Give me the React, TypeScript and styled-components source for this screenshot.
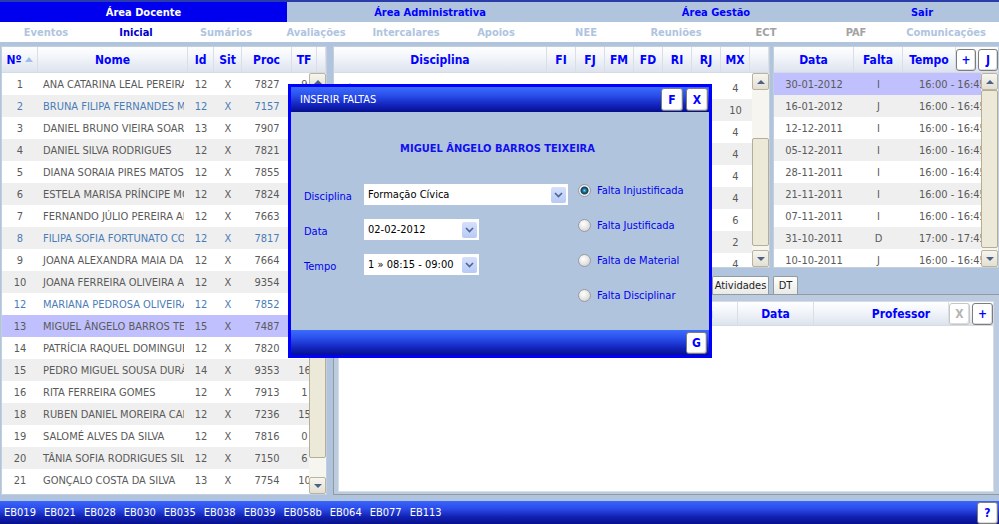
import React from "react";
import styled, { createGlobalStyle } from "styled-components";

const GlobalStyle = createGlobalStyle`
  html, body { margin: 0; padding: 0; background: #b0c4de; }
  body {
    font-family: "DejaVu Sans Condensed", "DejaVu Sans", Verdana, sans-serif;
    font-stretch: condensed;
    font-size: 11px;
  }
  * { box-sizing: border-box; }
`;

const Page = styled.div`
  position: relative;
  width: 999px;
  height: 524px;
  display: flex;
  flex-direction: column;
  background: #b0c4de;
  overflow: hidden;
`;

const TopNav = styled.div`
  display: grid;
  grid-template-columns: 287px 286px 286px 126px;
  height: 22px;
  border-top: 2px solid #2a3caa;
`;

const NavCell = styled.div<{ $active?: boolean }>`
  display: flex;
  align-items: center;
  justify-content: center;
  font-weight: bold;
  font-size: 11px;
  color: ${(p) => (p.$active ? "#ffffff" : "#0000ff")};
  background: ${(p) => (p.$active ? "#0000ee" : "transparent")};
`;

const SubNav = styled.div`
  display: grid;
  grid-template-columns: repeat(11, 90px);
  height: 20px;
  padding-left: 1px;
  background: #ffffff;
`;

const SubItem = styled.div<{ $tone: "on" | "off" | "dim" }>`
  display: flex;
  align-items: center;
  justify-content: center;
  font-weight: bold;
  font-size: 11px;
  color: ${(p) => (p.$tone === "on" ? "#0000cc" : p.$tone === "dim" ? "#a2a2a2" : "#b0c4de")};
`;

const Main = styled.div`
  flex: 1;
  display: flex;
  gap: 6px;
  padding: 4px 0 6px 1px;
  min-height: 0;
`;

const Panel = styled.div<{ $w: number }>`
  width: ${(p) => p.$w}px;
  display: flex;
  flex-direction: column;
  background: #ffffff;
  border: 1px solid #c4cfdd;
  overflow: hidden;
`;

const Header = styled.div<{ $cols: string; $h?: number }>`
  display: grid;
  grid-template-columns: ${(p) => p.$cols};
  height: ${(p) => p.$h ?? 26}px;
  flex-shrink: 0;
  background: linear-gradient(#ffffff, #f1f4f9 45%, #dde3ee);
  border-bottom: 1px solid #d5dbe5;
`;

const HeadCell = styled.div<{ $indent?: number }>`
  display: flex;
  align-items: center;
  justify-content: center;
  gap: 3px;
  padding-left: ${(p) => p.$indent ?? 0}px;
  font-weight: bold;
  font-size: 12px;
  color: #0000ff;
  border-right: 1px solid #d9dee7;
  white-space: nowrap;
  overflow: hidden;
`;

const HeadTools = styled.div`
  display: flex;
  align-items: center;
  justify-content: flex-end;
  gap: 2px;
  padding-right: 1px;
`;

const SortArrow = styled.span`
  width: 0;
  height: 0;
  border-left: 4px solid transparent;
  border-right: 4px solid transparent;
  border-bottom: 5px solid #9ec0e8;
`;

const Body = styled.div`
  flex: 1;
  display: flex;
  min-height: 0;
`;

const Rows = styled.div<{ $pad?: number }>`
  flex: 1;
  overflow: hidden;
  padding-top: ${(p) => p.$pad ?? 0}px;
`;

const Row = styled.div<{ $cols: string; $tone: "white" | "gray" | "sel" }>`
  display: grid;
  grid-template-columns: ${(p) => p.$cols};
  height: 22px;
  background: ${(p) => (p.$tone === "sel" ? "#c0c0ff" : p.$tone === "gray" ? "#efefef" : "#ffffff")};
`;

const Cell = styled.div<{ $align?: "left" | "center" | "right"; $blue?: boolean; $pad?: number; $clip?: number }>`
  display: flex;
  align-items: center;
  justify-content: ${(p) => (p.$align === "left" ? "flex-start" : p.$align === "right" ? "flex-end" : "center")};
  padding-left: ${(p) => p.$pad ?? 0}px;
  margin-right: ${(p) => p.$clip ?? 0}px;
  white-space: nowrap;
  overflow: hidden;
  font-size: 11px;
  color: ${(p) => (p.$blue ? "#4a7cb8" : "#5a5a5a")};
`;

const ScrollCol = styled.div`
  width: 17px;
  flex-shrink: 0;
  display: flex;
  flex-direction: column;
  background: #f6f5f0;
`;

const ScrollBtn = styled.div`
  height: 17px;
  display: flex;
  align-items: center;
  justify-content: center;
  background: linear-gradient(#f6f5ef, #e3e0d2);
  border: 1px solid #b9b39f;
  border-radius: 2px;
`;

const Tri = styled.span<{ $down?: boolean }>`
  width: 0;
  height: 0;
  border-left: 4px solid transparent;
  border-right: 4px solid transparent;
  ${(p) => (p.$down ? "border-top: 4px solid #4d6185;" : "border-bottom: 4px solid #4d6185;")}
`;

const Track = styled.div`
  flex: 1;
  position: relative;
`;

const Thumb = styled.div<{ $top: number; $h: number }>`
  position: absolute;
  left: 0;
  right: 0;
  top: ${(p) => p.$top}px;
  height: ${(p) => p.$h}px;
  background: #ece9d8;
  border: 1px solid #b4ad97;
  border-radius: 2px;
`;

const Scrollbar = ({ top, h }: { top: number; h: number }) => (
  <ScrollCol>
    <ScrollBtn>
      <Tri />
    </ScrollBtn>
    <Track>
      <Thumb $top={top} $h={h} />
    </Track>
    <ScrollBtn>
      <Tri $down />
    </ScrollBtn>
  </ScrollCol>
);

const SquareBtn = styled.button<{ $off?: boolean; $w?: number; $h?: number }>`
  width: ${(p) => p.$w ?? 20}px;
  height: ${(p) => p.$h ?? 22}px;
  padding: 0;
  display: flex;
  align-items: center;
  justify-content: center;
  font-family: inherit;
  font-weight: bold;
  font-size: 12px;
  color: ${(p) => (p.$off ? "#b4b4b4" : "#0000ff")};
  background: #ffffff;
  border: 1px solid ${(p) => (p.$off ? "#c6c6c6" : "#7d7d7d")};
  border-radius: 3px;
  box-shadow: inset -1px -1px 0 #dcdcdc;
`;

const RightArea = styled.div`
  width: 666px;
  display: flex;
  flex-direction: column;
`;

const TopRow = styled.div`
  display: flex;
  gap: 3px;
  height: 222px;
`;

const TabStrip = styled.div`
  display: flex;
  gap: 4px;
  height: 18px;
  margin-top: 8px;
`;

const Tab = styled.div<{ $w: number }>`
  width: ${(p) => p.$w}px;
  display: flex;
  align-items: center;
  justify-content: center;
  font-size: 11px;
  color: #1e1e1e;
  background: linear-gradient(#ffffff, #e9e9e6);
  border: 1px solid #919b9c;
  border-bottom: none;
  border-radius: 2px 2px 0 0;
`;

const BottomPanel = styled.div`
  flex: 1;
  display: flex;
  flex-direction: column;
  padding: 6px 5px 2px 4px;
  border: 1px solid #919b9c;
  border-right: none;
  background: #bccbe0;
`;

const BottomInner = styled.div`
  flex: 1;
  display: flex;
  flex-direction: column;
  background: #ffffff;
  border: 1px solid #d7dde6;
`;

const Footer = styled.div`
  height: 23px;
  display: flex;
  align-items: center;
  gap: 8px;
  padding-left: 4px;
  background: linear-gradient(#3a66fb, #2a4ae8 35%, #1020b0 70%, #08108c);
`;

const School = styled.span`
  color: #ffffff;
  font-size: 11px;
`;

const FooterEnd = styled.div`
  margin-left: auto;
  padding-right: 1px;
  align-self: flex-end;
`;

/* dialog */
const Dialog = styled.div`
  position: absolute;
  left: 288px;
  top: 84px;
  width: 424px;
  height: 274px;
  display: flex;
  flex-direction: column;
  border: 3px solid #0000ff;
  background: #b0c4de;
`;

const DialogBar = styled.div`
  height: 25px;
  flex-shrink: 0;
  display: flex;
  align-items: center;
  gap: 3px;
  padding: 0 1px 0 9px;
  background: linear-gradient(#3b6cfb, #2c52ee 30%, #1426c0 70%, #050f8c);
`;

const DialogTitle = styled.span`
  flex: 1;
  color: #ffffff;
  font-size: 11px;
`;

const DialogBody = styled.div`
  flex: 1;
  display: flex;
  flex-direction: column;
  padding: 30px 0 0 13px;
`;

const StudentName = styled.div`
  height: 14px;
  text-align: center;
  font-weight: bold;
  font-size: 11px;
  color: #1010ee;
  margin-right: 18px;
`;

const FormWrap = styled.div`
  display: flex;
  gap: 10px;
  margin-top: 28px;
`;

const Fields = styled.div`
  width: 264px;
  display: flex;
  flex-direction: column;
  gap: 14px;
`;

const Field = styled.div`
  display: flex;
  align-items: center;
  height: 21px;
`;

const Label = styled.span`
  width: 60px;
  padding-top: 3px;
  font-size: 11px;
  color: #0000ee;
`;

const Select = styled.div<{ $w: number }>`
  width: ${(p) => p.$w}px;
  height: 21px;
  display: flex;
  align-items: center;
  justify-content: space-between;
  padding: 0 2px 0 4px;
  background: #ffffff;
  font-size: 11px;
  color: #000000;
  white-space: nowrap;
`;

const Drop = styled.span`
  width: 15px;
  height: 16px;
  flex-shrink: 0;
  display: flex;
  align-items: center;
  justify-content: center;
  background: linear-gradient(#d5e0fb, #b8caf5);
  border-radius: 2px;
`;

const Radios = styled.div`
  display: flex;
  flex-direction: column;
  gap: 21px;
  margin-top: -1px;
`;

const RadioRow = styled.div`
  display: flex;
  align-items: center;
  gap: 6px;
  height: 14px;
  font-size: 11px;
  color: #0000ee;
`;

const RadioDot = styled.span<{ $on?: boolean }>`
  width: 13px;
  height: 13px;
  border-radius: 50%;
  border: 1px solid #9c9c9c;
  background: ${(p) =>
    p.$on
      ? "radial-gradient(circle at 50% 50%, #7fd0e8 0, #1b6b8c 2px, #0f3d5c 3.5px, #f4f4f4 4.5px, #d2d2d2 100%)"
      : "radial-gradient(circle at 40% 35%, #ffffff 0, #e6e6e6 50%, #c4c4c4 100%)"};
`;

const DialogFoot = styled.div`
  height: 25px;
  flex-shrink: 0;
  display: flex;
  align-items: center;
  justify-content: flex-end;
  padding-right: 2px;
  background: linear-gradient(#3b6cfb, #2c52ee 30%, #1426c0 70%, #050f8c);
`;

const Chevron = () => (
  <svg width="9" height="6" viewBox="0 0 9 6">
    <polyline points="1,1 4.5,4.5 8,1" fill="none" stroke="#4f6496" strokeWidth="1.6" />
  </svg>
);

type StudentRow = [string, string, string, string, string, string, boolean?];

const students: StudentRow[] = [
  ["1", "ANA CATARINA LEAL PEREIRA", "12", "X", "7827", "9"],
  ["2", "BRUNA FILIPA FERNANDES MOTA", "12", "X", "7157", "3", true],
  ["3", "DANIEL BRUNO VIEIRA SOARES", "13", "X", "7907", "2"],
  ["4", "DANIEL SILVA RODRIGUES", "12", "X", "7821", "4"],
  ["5", "DIANA SORAIA PIRES MATOS", "12", "X", "7855", "1"],
  ["6", "ESTELA MARISA PRÍNCIPE MOTA", "12", "X", "7824", "0"],
  ["7", "FERNANDO JÚLIO PEREIRA ALVES", "12", "X", "7663", "5"],
  ["8", "FILIPA SOFIA FORTUNATO COSTA", "12", "X", "7817", "2", true],
  ["9", "JOANA ALEXANDRA MAIA DA SILVA", "12", "X", "7664", "3"],
  ["10", "JOANA FERREIRA OLIVEIRA ALVES", "12", "X", "9354", "1"],
  ["12", "MARIANA PEDROSA OLIVEIRA", "12", "X", "7852", "0", true],
  ["13", "MIGUEL ÂNGELO BARROS TEIXEIRA", "15", "X", "7487", "12"],
  ["14", "PATRÍCIA RAQUEL DOMINGUES", "12", "X", "7820", "4"],
  ["15", "PEDRO MIGUEL SOUSA DURÃO", "14", "X", "9353", "16"],
  ["16", "RITA FERREIRA GOMES", "12", "X", "7913", "1"],
  ["18", "RUBEN DANIEL MOREIRA CAMPOS", "12", "X", "7236", "15"],
  ["19", "SALOMÉ ALVES DA SILVA", "12", "X", "7816", "0"],
  ["20", "TÂNIA SOFIA RODRIGUES SILVA", "12", "X", "7150", "6"],
  ["21", "GONÇALO COSTA DA SILVA", "13", "X", "7754", "10"],
];

const subjects: [string, string][] = [
  ["Língua Portuguesa", "4"],
  ["Matemática", "10"],
  ["Inglês", "4"],
  ["Francês", "4"],
  ["História", "4"],
  ["Geografia", "4"],
  ["Ciências Naturais", "6"],
  ["Formação Cívica", "2"],
  ["Educação Física", "4"],
];

const absences: [string, string, string][] = [
  ["30-01-2012", "I", "16:00 - 16:45"],
  ["16-01-2012", "J", "16:00 - 16:45"],
  ["12-12-2011", "I", "16:00 - 16:45"],
  ["05-12-2011", "I", "16:00 - 16:45"],
  ["28-11-2011", "I", "16:00 - 16:45"],
  ["21-11-2011", "I", "16:00 - 16:45"],
  ["07-11-2011", "I", "16:00 - 16:45"],
  ["31-10-2011", "D", "17:00 - 17:45"],
  ["10-10-2011", "J", "16:00 - 16:45"],
];

const schools = ["EB019", "EB021", "EB028", "EB030", "EB035", "EB038", "EB039", "EB058b", "EB064", "EB077", "EB113"];

const subMenu: [string, "on" | "off" | "dim"][] = [
  ["Eventos", "off"],
  ["Inicial", "on"],
  ["Sumários", "off"],
  ["Avaliações", "off"],
  ["Intercalares", "off"],
  ["Apoios", "off"],
  ["NEE", "off"],
  ["Reuniões", "off"],
  ["ECT", "dim"],
  ["PAF", "dim"],
  ["Comunicações", "off"],
];

const tabs: [string, number][] = [
  ["Sumários", 62],
  ["Faltas", 50],
  ["Avaliações", 64],
  ["Ocorrências", 74],
  ["Contactos", 62],
  ["Apoios", 43],
  ["Atividades", 57],
  ["DT", 25],
];

const LEFT_HEAD = "36px 150px 26px 28px 50px 25px 1fr";
const LEFT_ROW = "36px 150px 26px 28px 50px 25px";
const MID_HEAD = "213px repeat(7, 29px) 1fr";
const MID_ROW = "213px repeat(7, 29px)";
const RIGHT_HEAD = "80px 49px 53px 1fr";
const RIGHT_ROW = "80px 49px 1fr";
const BOTTOM_HEAD = "220px 100px 79px 76px 135px 1fr";

const tone = (i: number) => (i % 2 === 0 ? "white" : "gray");

export default function App() {
  return (
    <>
      <GlobalStyle />
      <Page>
        <TopNav>
          <NavCell $active>Área Docente</NavCell>
          <NavCell>Área Administrativa</NavCell>
          <NavCell>Área Gestão</NavCell>
          <NavCell>Sair</NavCell>
        </TopNav>
        <SubNav>
          {subMenu.map(([label, t]) => (
            <SubItem key={label} $tone={t}>
              {label}
            </SubItem>
          ))}
        </SubNav>

        <Main>
          <Panel $w={327}>
            <Header $cols={LEFT_HEAD}>
              <HeadCell>
                Nº
                <SortArrow />
              </HeadCell>
              <HeadCell>Nome</HeadCell>
              <HeadCell>Id</HeadCell>
              <HeadCell>Sit</HeadCell>
              <HeadCell>Proc</HeadCell>
              <HeadCell>TF</HeadCell>
              <HeadCell />
            </Header>
            <Body>
              <Rows>
                {students.map(([n, name, id, sit, proc, tf, blue], i) => (
                  <Row key={n} $cols={LEFT_ROW} $tone={n === "13" ? "sel" : tone(i)}>
                    <Cell $blue={blue}>{n}</Cell>
                    <Cell $align="left" $pad={5} $clip={4} $blue={blue}>
                      {name}
                    </Cell>
                    <Cell $blue={blue}>{id}</Cell>
                    <Cell $blue={blue}>{sit}</Cell>
                    <Cell $blue={blue}>{proc}</Cell>
                    <Cell $blue={blue}>{tf}</Cell>
                  </Row>
                ))}
              </Rows>
              <Scrollbar top={0} h={368} />
            </Body>
          </Panel>

          <RightArea>
            <TopRow>
              <Panel $w={437}>
                <Header $cols={MID_HEAD}>
                  <HeadCell>Disciplina</HeadCell>
                  {["FI", "FJ", "FM", "FD", "RI", "RJ", "MX"].map((h) => (
                    <HeadCell key={h}>{h}</HeadCell>
                  ))}
                  <HeadCell />
                </Header>
                <Body>
                  <Rows $pad={4}>
                    {subjects.map(([name, mx], i) => (
                      <Row key={name} $cols={MID_ROW} $tone={tone(i)}>
                        <Cell $align="left" $pad={8}>
                          {name}
                        </Cell>
                        <Cell />
                        <Cell />
                        <Cell />
                        <Cell />
                        <Cell />
                        <Cell />
                        <Cell>{mx}</Cell>
                      </Row>
                    ))}
                  </Rows>
                  <Scrollbar top={48} h={108} />
                </Body>
              </Panel>

              <Panel $w={226}>
                <Header $cols={RIGHT_HEAD}>
                  <HeadCell>Data</HeadCell>
                  <HeadCell>Falta</HeadCell>
                  <HeadCell>Tempo</HeadCell>
                  <HeadTools>
                    <SquareBtn>+</SquareBtn>
                    <SquareBtn>J</SquareBtn>
                  </HeadTools>
                </Header>
                <Body>
                  <Rows>
                    {absences.map(([d, f, t], i) => (
                      <Row key={d} $cols={RIGHT_ROW} $tone={i === 0 ? "sel" : tone(i)}>
                        <Cell>{d}</Cell>
                        <Cell>{f}</Cell>
                        <Cell $align="left" $pad={16}>
                          {t}
                        </Cell>
                      </Row>
                    ))}
                  </Rows>
                  <Scrollbar top={0} h={158} />
                </Body>
              </Panel>
            </TopRow>

            <TabStrip>
              {tabs.map(([label, w]) => (
                <Tab key={label} $w={w}>
                  {label}
                </Tab>
              ))}
            </TabStrip>

            <BottomPanel>
              <BottomInner>
                <Header $cols={BOTTOM_HEAD} $h={24}>
                  <HeadCell>Disciplina</HeadCell>
                  <HeadCell>Tipo</HeadCell>
                  <HeadCell>Grau</HeadCell>
                  <HeadCell>Data</HeadCell>
                  <HeadCell $indent={40}>Professor</HeadCell>
                  <HeadTools>
                    <SquareBtn $off $w={21}>
                      X
                    </SquareBtn>
                    <SquareBtn $w={21}>+</SquareBtn>
                  </HeadTools>
                </Header>
              </BottomInner>
            </BottomPanel>
          </RightArea>
        </Main>

        <Footer>
          {schools.map((s) => (
            <School key={s}>{s}</School>
          ))}
          <FooterEnd>
            <SquareBtn $w={21}>?</SquareBtn>
          </FooterEnd>
        </Footer>

        <Dialog>
          <DialogBar>
            <DialogTitle>INSERIR FALTAS</DialogTitle>
            <SquareBtn $w={22} $h={23}>
              F
            </SquareBtn>
            <SquareBtn $w={22} $h={23}>
              X
            </SquareBtn>
          </DialogBar>
          <DialogBody>
            <StudentName>MIGUEL ÂNGELO BARROS TEIXEIRA</StudentName>
            <FormWrap>
              <Fields>
                <Field>
                  <Label>Disciplina</Label>
                  <Select $w={204}>
                    Formação Cívica
                    <Drop>
                      <Chevron />
                    </Drop>
                  </Select>
                </Field>
                <Field>
                  <Label>Data</Label>
                  <Select $w={115}>
                    02-02-2012
                    <Drop>
                      <Chevron />
                    </Drop>
                  </Select>
                </Field>
                <Field>
                  <Label>Tempo</Label>
                  <Select $w={115}>
                    1 » 08:15 - 09:00
                    <Drop>
                      <Chevron />
                    </Drop>
                  </Select>
                </Field>
              </Fields>
              <Radios>
                <RadioRow>
                  <RadioDot $on />
                  Falta Injustificada
                </RadioRow>
                <RadioRow>
                  <RadioDot />
                  Falta Justificada
                </RadioRow>
                <RadioRow>
                  <RadioDot />
                  Falta de Material
                </RadioRow>
                <RadioRow>
                  <RadioDot />
                  Falta Disciplinar
                </RadioRow>
              </Radios>
            </FormWrap>
          </DialogBody>
          <DialogFoot>
            <SquareBtn $w={21}>G</SquareBtn>
          </DialogFoot>
        </Dialog>
      </Page>
    </>
  );
}
